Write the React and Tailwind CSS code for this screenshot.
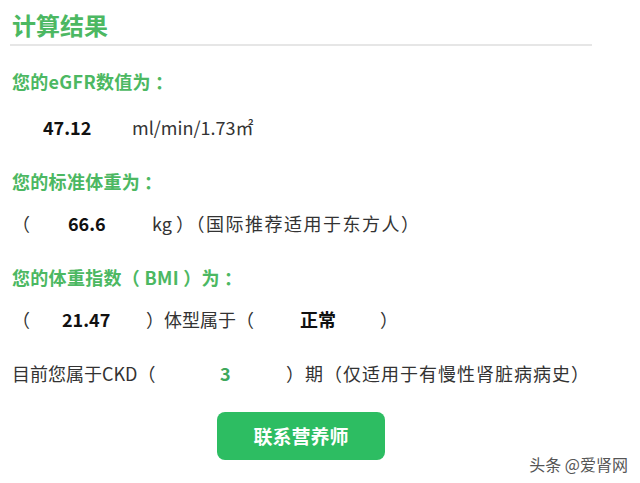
import React from 'react';

const font = { fontFamily: '"Noto Sans CJK SC", "Open Sans", sans-serif' };

function Heading({ children }) {
  return <div className="text-[18px] font-bold text-[#4cb862] leading-[26px] tracking-[0.3px]">{children}</div>;
}

export default function App() {
  return (
    <div className="relative w-[640px] h-[483px] bg-white text-[#333] overflow-hidden" style={font}>
      <div className="pl-[10px] pr-[48px] pt-[8px]">
        <div className="pl-[2px] text-[24px] font-bold text-[#4cb862] leading-[34px]">计算结果</div>
        <div className="mt-[2px] h-[2px] bg-[#e6e6e6]" />

        <div className="pl-[2px] mt-[22px]">
          <Heading>您的eGFR数值为<span className="pl-[4px]">：</span></Heading>
          <div className="flex items-baseline mt-[20px] text-[18px] leading-[26px]">
            <span className="ml-[31px] w-[89px] font-bold text-[#111]">47.12</span>
            <span>ml/min/1.73㎡</span>
          </div>

          <div className="mt-[28px]">
            <Heading>您的标准体重为<span className="pl-[4px]">：</span></Heading>
          </div>
          <div className="flex items-baseline mt-[16px] text-[18px] leading-[26px]">
            <span className="w-[56px]">（</span>
            <span className="w-[84px] font-bold text-[#111]">66.6</span>
            <span>kg</span>
            <span className="pl-[4px] tracking-[1.5px]">）（国际推荐适用于东方人）</span>
          </div>

          <div className="mt-[28px]">
            <Heading>您的体重指数（ BMI ）为<span className="pl-[4px]">：</span></Heading>
          </div>
          <div className="flex items-baseline mt-[16px] text-[18px] leading-[26px]">
            <span className="w-[50px]">（</span>
            <span className="w-[84px] font-bold text-[#111]">21.47</span>
            <span className="w-[154px]">）体型属于（</span>
            <span className="w-[80px] font-bold text-[#111]">正常</span>
            <span>）</span>
          </div>

          <div className="flex items-baseline mt-[28px] text-[18px] leading-[26px]">
            <span className="w-[208px]">目前您属于CKD（</span>
            <span className="w-[66px] font-bold text-[#3fa85c]">3</span>
            <span className="tracking-[1px]">）期（仅适用于有慢性肾脏病病史）</span>
          </div>
        </div>
      </div>

      <div className="flex justify-center mt-[26px] pr-[38px]">
        <button className="w-[168px] h-[48px] rounded-[8px] bg-[#2dbd62] text-white text-[19px] font-bold">
          联系营养师
        </button>
      </div>

      <div className="absolute right-[12px] bottom-[7px] text-[16px] text-[#555]">头条 @爱肾网</div>
    </div>
  );
}
